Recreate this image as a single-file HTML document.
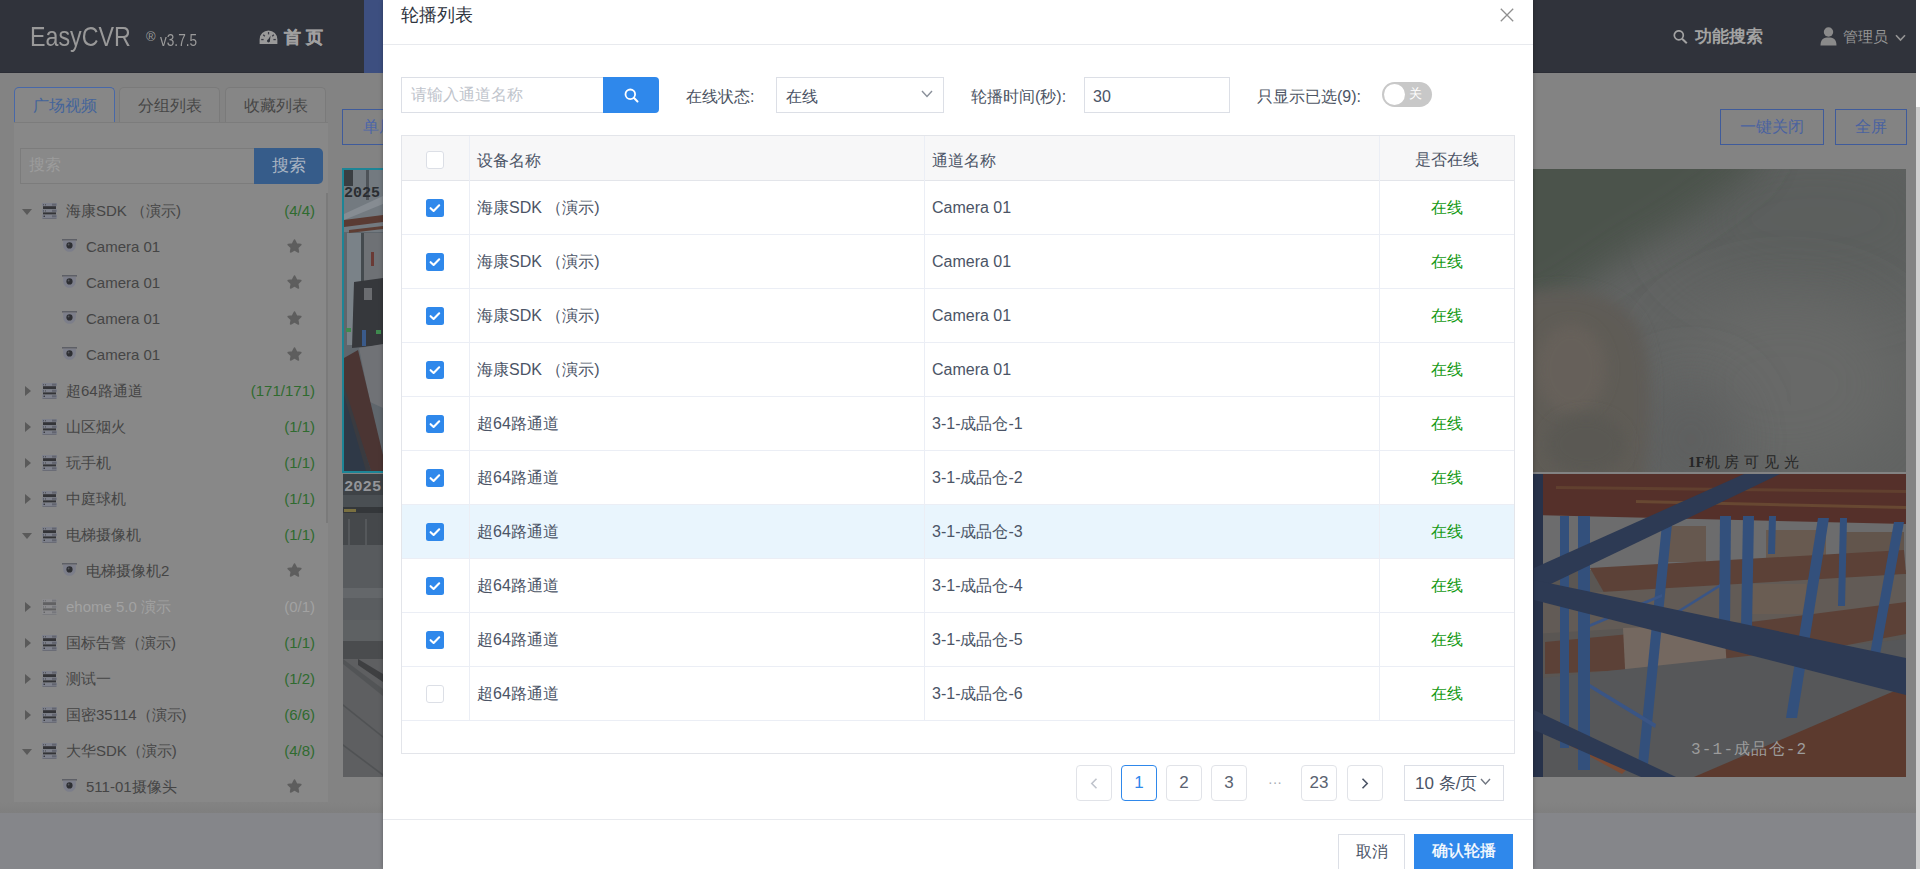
<!DOCTYPE html>
<html><head><meta charset="utf-8">
<style>
*{box-sizing:border-box;margin:0;padding:0}
html,body{width:1920px;height:869px;overflow:hidden;background:#838383;font-family:"Liberation Sans",sans-serif;position:relative}
.a{position:absolute}
#hdr{left:0;top:0;width:1920px;height:73px;background:#30333b;border-bottom:1px solid #2b2d35}
.logo{left:30px;top:17px;font-size:28px;color:#999999;line-height:40px;white-space:nowrap;transform-origin:0 0;transform:scaleX(0.83)}
.ver{left:146px;top:29px;font-size:16px;color:#9b9b9b;line-height:24px;white-space:nowrap}
.home{left:284px;top:26px;font-size:17px;font-weight:bold;color:#a0a0a0;letter-spacing:5px;-webkit-text-stroke:0.4px #a0a0a0;line-height:24px}
.hdr-r{font-size:16px;font-weight:bold;color:#a3a3a3;line-height:24px;white-space:nowrap}
.tab{top:87px;height:36px;border:1px solid #7a7a7a;border-bottom:none;border-radius:5px 5px 0 0;font-size:16px;line-height:36px;text-align:center;color:#474747;background:#868686}
.tab.on{border-color:#4868a8;color:#44649a;height:37px;background:#878787}
#panel{left:14px;top:122px;width:314px;height:680px;background:#888888;border-top:1px solid #7c7c7c}
.tr{position:absolute;left:0;width:314px;height:36px;font-size:15px;color:#454545;line-height:36px;white-space:nowrap}
.tr span{position:absolute;top:0}
.tr .cnt{right:13px;color:#2f6b2f}
.tr .nm{left:52px}
.tr .nm2{left:72px}
.tr.dis span{color:#a2a2a2}
.tr.dis svg{opacity:.45}
.tr.dis .cnt{color:#a2a2a2}
.tri-d{left:8px;top:16px;width:0;height:0;border-left:5px solid transparent;border-right:5px solid transparent;border-top:6px solid #5a5a5a}
.tri-r{left:11px;top:13px;width:0;height:0;border-top:5px solid transparent;border-bottom:5px solid transparent;border-left:6px solid #5a5a5a}
.btn-o{border:1px solid #3f5b9b;color:#4a62a0;font-size:16px;text-align:center;line-height:33px;height:36px}
#modal{left:383px;top:0;width:1150px;height:869px;background:#fff;box-shadow:0 0 4px rgba(0,0,0,.3)}
.m{position:absolute}
.lbl{font-size:16px;color:#4d5564;line-height:24px;white-space:nowrap}
.inp{border:1px solid #dcdfe6;background:#fff;height:36px}
#tbl{left:18px;top:135px;width:1114px;height:619px;border:1px solid #e3e5ea}
.row{left:0;width:1112px;height:54px;border-bottom:1px solid #ebeef5}
.row span{font-size:16px;color:#4b5466;line-height:24px;top:15px;white-space:nowrap}
.row .c1{left:75px}
.row .c2{left:530px}
.row .c3{left:977px;width:135px;text-align:center;color:#159a15}
.row .cb{left:24px;top:18px;width:18px;height:18px}
.vl{width:1px;background:#ebeef5}
.pg{top:765px;width:36px;height:36px;border:1px solid #e1e3e8;border-radius:4px;font-size:17px;color:#5a6270;text-align:center;line-height:33px}
</style></head><body>
<!-- header -->
<div id="hdr" class="a"></div>
<div class="a" style="left:364px;top:0;width:30px;height:73px;background:#3d4f80"></div>
<div class="a logo">EasyCVR</div>
<div class="a ver"><span style="font-size:13px;position:relative;top:-5px">®</span> <span style="display:inline-block;transform:scaleX(0.85);transform-origin:0 0">v3.7.5</span></div>
<svg class="a" style="left:259px;top:30px" width="19" height="14" viewBox="0 0 19 14"><path d="M0.6 14 L0.6 9.4 A8.9 8.9 0 0 1 18.4 9.4 L18.4 14 Z" fill="#9a9a9a"/><rect x="8.9" y="2" width="1.3" height="2.4" fill="#3a3b45"/><rect x="4.4" y="4.4" width="1.3" height="2.2" fill="#3a3b45" transform="rotate(-45 5 5.5)"/><rect x="13.4" y="4.4" width="1.3" height="2.2" fill="#3a3b45" transform="rotate(45 14 5.5)"/><rect x="2.2" y="8.9" width="2.4" height="1.3" fill="#3a3b45"/><rect x="14.4" y="8.9" width="2.4" height="1.3" fill="#3a3b45"/><path d="M8.2 11.2 L10.8 11.6 L11.6 5.6 Z" fill="#30333b"/><circle cx="9.5" cy="11" r="1.4" fill="#30333b"/></svg>
<div class="a home">首页</div>
<svg class="a" style="left:1673px;top:30px" width="15" height="15" viewBox="0 0 15 15"><circle cx="5.8" cy="5.3" r="4.5" fill="none" stroke="#a3a3a3" stroke-width="1.7"/><path d="M9.1 8.7 L13.8 13.3" stroke="#a3a3a3" stroke-width="2"/></svg>
<div class="a hdr-r" style="left:1695px;top:25px;font-size:17px">功能搜索</div>
<svg class="a" style="left:1820px;top:27px" width="17" height="19" viewBox="0 0 17 19"><circle cx="8.5" cy="5" r="4.7" fill="#8a8a8a"/><path d="M0.5 18.5 C0.5 12 4 10.5 8.5 10.5 C13 10.5 16.5 12 16.5 18.5 Z" fill="#8a8a8a"/></svg>
<div class="a" style="left:1843px;top:25px;font-size:15px;color:#959595;line-height:24px">管理员</div>
<svg class="a" style="left:1895px;top:34px" width="11" height="8" viewBox="0 0 11 8"><path d="M1 1.2 L5.5 6 L10 1.2" fill="none" stroke="#959595" stroke-width="1.6"/></svg>

<!-- left tabs -->
<div class="a tab on" style="left:14px;width:101px">广场视频</div>
<div class="a tab" style="left:119px;width:101px">分组列表</div>
<div class="a tab" style="left:225px;width:101px">收藏列表</div>
<div class="a" id="panel">
  <div class="a" style="left:6px;top:25px;width:234px;height:36px;border:1px solid #7c7c7c;border-right:none;background:#898989"></div>
  <div class="a" style="left:15px;top:30px;font-size:16px;color:#9c9c9c;line-height:24px">搜索</div>
  <div class="a" style="left:240px;top:25px;width:69px;height:36px;background:#365c8a;border-radius:0 5px 5px 0;color:#a9b4c2;font-size:17px;text-align:center;line-height:36px">搜索</div>
  <div class="a" style="left:312px;top:70px;width:2px;height:330px;background:#7a7a7a"></div>
  <div class="tr" style="top:70px"><div class="a tri-d"></div><svg class="a" style="left:28px;top:10px" width="15" height="16" viewBox="0 0 15 16"><rect x="0" y="0" width="15" height="3.2" fill="#7d808b"/><rect x="10" y="0.6" width="4.4" height="2" fill="#62646f"/><rect x="1" y="1" width="1" height="1.4" fill="#55575f"/><rect x="3" y="1" width="1" height="1.4" fill="#55575f"/><rect x="1" y="3.2" width="13" height="3" fill="#333438"/><rect x="0" y="6.2" width="15" height="3.2" fill="#7d808b"/><rect x="10" y="6.8" width="4.4" height="2" fill="#62646f"/><rect x="1" y="7.2" width="1" height="1.4" fill="#55575f"/><rect x="3" y="7.2" width="1" height="1.4" fill="#55575f"/><rect x="1" y="9.4" width="13" height="2.2" fill="#333438"/><rect x="0" y="11.6" width="15" height="3.4" fill="#7d808b"/><rect x="10" y="12.3" width="4.4" height="2" fill="#62646f"/><rect x="1.5" y="12.6" width="1.5" height="1.4" fill="#3a3b40"/><rect x="0.5" y="15" width="14" height="1" fill="#6a6c76"/></svg><span class="nm">海康SDK （演示)</span><span class="cnt">(4/4)</span></div>
<div class="tr" style="top:106px"><svg class="a" style="left:48px;top:10.3px" width="15" height="14" viewBox="0 0 15 14"><rect x="0" y="0" width="15" height="1.6" fill="#5d5f66"/><path d="M1.2 1.8 H13.8 V6.5 A6.3 6.3 0 0 1 1.2 6.5 Z" fill="#7c7e8a"/><circle cx="7.5" cy="6.4" r="3.1" fill="#2e2f33"/><circle cx="6.6" cy="5.5" r="0.9" fill="#55575e"/></svg><span class="nm2">Camera 01</span><svg class="a" style="left:273px;top:10px" width="15" height="15" viewBox="0 0 15 15"><polygon points="7.50,1.00 9.44,4.93 13.78,5.56 10.64,8.62 11.38,12.94 7.50,10.90 3.62,12.94 4.36,8.62 1.22,5.56 5.56,4.93" fill="#5e5e5e" stroke="#5e5e5e" stroke-width="1.6" stroke-linejoin="round"/></svg></div>
<div class="tr" style="top:142px"><svg class="a" style="left:48px;top:10.3px" width="15" height="14" viewBox="0 0 15 14"><rect x="0" y="0" width="15" height="1.6" fill="#5d5f66"/><path d="M1.2 1.8 H13.8 V6.5 A6.3 6.3 0 0 1 1.2 6.5 Z" fill="#7c7e8a"/><circle cx="7.5" cy="6.4" r="3.1" fill="#2e2f33"/><circle cx="6.6" cy="5.5" r="0.9" fill="#55575e"/></svg><span class="nm2">Camera 01</span><svg class="a" style="left:273px;top:10px" width="15" height="15" viewBox="0 0 15 15"><polygon points="7.50,1.00 9.44,4.93 13.78,5.56 10.64,8.62 11.38,12.94 7.50,10.90 3.62,12.94 4.36,8.62 1.22,5.56 5.56,4.93" fill="#5e5e5e" stroke="#5e5e5e" stroke-width="1.6" stroke-linejoin="round"/></svg></div>
<div class="tr" style="top:178px"><svg class="a" style="left:48px;top:10.3px" width="15" height="14" viewBox="0 0 15 14"><rect x="0" y="0" width="15" height="1.6" fill="#5d5f66"/><path d="M1.2 1.8 H13.8 V6.5 A6.3 6.3 0 0 1 1.2 6.5 Z" fill="#7c7e8a"/><circle cx="7.5" cy="6.4" r="3.1" fill="#2e2f33"/><circle cx="6.6" cy="5.5" r="0.9" fill="#55575e"/></svg><span class="nm2">Camera 01</span><svg class="a" style="left:273px;top:10px" width="15" height="15" viewBox="0 0 15 15"><polygon points="7.50,1.00 9.44,4.93 13.78,5.56 10.64,8.62 11.38,12.94 7.50,10.90 3.62,12.94 4.36,8.62 1.22,5.56 5.56,4.93" fill="#5e5e5e" stroke="#5e5e5e" stroke-width="1.6" stroke-linejoin="round"/></svg></div>
<div class="tr" style="top:214px"><svg class="a" style="left:48px;top:10.3px" width="15" height="14" viewBox="0 0 15 14"><rect x="0" y="0" width="15" height="1.6" fill="#5d5f66"/><path d="M1.2 1.8 H13.8 V6.5 A6.3 6.3 0 0 1 1.2 6.5 Z" fill="#7c7e8a"/><circle cx="7.5" cy="6.4" r="3.1" fill="#2e2f33"/><circle cx="6.6" cy="5.5" r="0.9" fill="#55575e"/></svg><span class="nm2">Camera 01</span><svg class="a" style="left:273px;top:10px" width="15" height="15" viewBox="0 0 15 15"><polygon points="7.50,1.00 9.44,4.93 13.78,5.56 10.64,8.62 11.38,12.94 7.50,10.90 3.62,12.94 4.36,8.62 1.22,5.56 5.56,4.93" fill="#5e5e5e" stroke="#5e5e5e" stroke-width="1.6" stroke-linejoin="round"/></svg></div>
<div class="tr" style="top:250px"><div class="a tri-r"></div><svg class="a" style="left:28px;top:10px" width="15" height="16" viewBox="0 0 15 16"><rect x="0" y="0" width="15" height="3.2" fill="#7d808b"/><rect x="10" y="0.6" width="4.4" height="2" fill="#62646f"/><rect x="1" y="1" width="1" height="1.4" fill="#55575f"/><rect x="3" y="1" width="1" height="1.4" fill="#55575f"/><rect x="1" y="3.2" width="13" height="3" fill="#333438"/><rect x="0" y="6.2" width="15" height="3.2" fill="#7d808b"/><rect x="10" y="6.8" width="4.4" height="2" fill="#62646f"/><rect x="1" y="7.2" width="1" height="1.4" fill="#55575f"/><rect x="3" y="7.2" width="1" height="1.4" fill="#55575f"/><rect x="1" y="9.4" width="13" height="2.2" fill="#333438"/><rect x="0" y="11.6" width="15" height="3.4" fill="#7d808b"/><rect x="10" y="12.3" width="4.4" height="2" fill="#62646f"/><rect x="1.5" y="12.6" width="1.5" height="1.4" fill="#3a3b40"/><rect x="0.5" y="15" width="14" height="1" fill="#6a6c76"/></svg><span class="nm">超64路通道</span><span class="cnt">(171/171)</span></div>
<div class="tr" style="top:286px"><div class="a tri-r"></div><svg class="a" style="left:28px;top:10px" width="15" height="16" viewBox="0 0 15 16"><rect x="0" y="0" width="15" height="3.2" fill="#7d808b"/><rect x="10" y="0.6" width="4.4" height="2" fill="#62646f"/><rect x="1" y="1" width="1" height="1.4" fill="#55575f"/><rect x="3" y="1" width="1" height="1.4" fill="#55575f"/><rect x="1" y="3.2" width="13" height="3" fill="#333438"/><rect x="0" y="6.2" width="15" height="3.2" fill="#7d808b"/><rect x="10" y="6.8" width="4.4" height="2" fill="#62646f"/><rect x="1" y="7.2" width="1" height="1.4" fill="#55575f"/><rect x="3" y="7.2" width="1" height="1.4" fill="#55575f"/><rect x="1" y="9.4" width="13" height="2.2" fill="#333438"/><rect x="0" y="11.6" width="15" height="3.4" fill="#7d808b"/><rect x="10" y="12.3" width="4.4" height="2" fill="#62646f"/><rect x="1.5" y="12.6" width="1.5" height="1.4" fill="#3a3b40"/><rect x="0.5" y="15" width="14" height="1" fill="#6a6c76"/></svg><span class="nm">山区烟火</span><span class="cnt">(1/1)</span></div>
<div class="tr" style="top:322px"><div class="a tri-r"></div><svg class="a" style="left:28px;top:10px" width="15" height="16" viewBox="0 0 15 16"><rect x="0" y="0" width="15" height="3.2" fill="#7d808b"/><rect x="10" y="0.6" width="4.4" height="2" fill="#62646f"/><rect x="1" y="1" width="1" height="1.4" fill="#55575f"/><rect x="3" y="1" width="1" height="1.4" fill="#55575f"/><rect x="1" y="3.2" width="13" height="3" fill="#333438"/><rect x="0" y="6.2" width="15" height="3.2" fill="#7d808b"/><rect x="10" y="6.8" width="4.4" height="2" fill="#62646f"/><rect x="1" y="7.2" width="1" height="1.4" fill="#55575f"/><rect x="3" y="7.2" width="1" height="1.4" fill="#55575f"/><rect x="1" y="9.4" width="13" height="2.2" fill="#333438"/><rect x="0" y="11.6" width="15" height="3.4" fill="#7d808b"/><rect x="10" y="12.3" width="4.4" height="2" fill="#62646f"/><rect x="1.5" y="12.6" width="1.5" height="1.4" fill="#3a3b40"/><rect x="0.5" y="15" width="14" height="1" fill="#6a6c76"/></svg><span class="nm">玩手机</span><span class="cnt">(1/1)</span></div>
<div class="tr" style="top:358px"><div class="a tri-r"></div><svg class="a" style="left:28px;top:10px" width="15" height="16" viewBox="0 0 15 16"><rect x="0" y="0" width="15" height="3.2" fill="#7d808b"/><rect x="10" y="0.6" width="4.4" height="2" fill="#62646f"/><rect x="1" y="1" width="1" height="1.4" fill="#55575f"/><rect x="3" y="1" width="1" height="1.4" fill="#55575f"/><rect x="1" y="3.2" width="13" height="3" fill="#333438"/><rect x="0" y="6.2" width="15" height="3.2" fill="#7d808b"/><rect x="10" y="6.8" width="4.4" height="2" fill="#62646f"/><rect x="1" y="7.2" width="1" height="1.4" fill="#55575f"/><rect x="3" y="7.2" width="1" height="1.4" fill="#55575f"/><rect x="1" y="9.4" width="13" height="2.2" fill="#333438"/><rect x="0" y="11.6" width="15" height="3.4" fill="#7d808b"/><rect x="10" y="12.3" width="4.4" height="2" fill="#62646f"/><rect x="1.5" y="12.6" width="1.5" height="1.4" fill="#3a3b40"/><rect x="0.5" y="15" width="14" height="1" fill="#6a6c76"/></svg><span class="nm">中庭球机</span><span class="cnt">(1/1)</span></div>
<div class="tr" style="top:394px"><div class="a tri-d"></div><svg class="a" style="left:28px;top:10px" width="15" height="16" viewBox="0 0 15 16"><rect x="0" y="0" width="15" height="3.2" fill="#7d808b"/><rect x="10" y="0.6" width="4.4" height="2" fill="#62646f"/><rect x="1" y="1" width="1" height="1.4" fill="#55575f"/><rect x="3" y="1" width="1" height="1.4" fill="#55575f"/><rect x="1" y="3.2" width="13" height="3" fill="#333438"/><rect x="0" y="6.2" width="15" height="3.2" fill="#7d808b"/><rect x="10" y="6.8" width="4.4" height="2" fill="#62646f"/><rect x="1" y="7.2" width="1" height="1.4" fill="#55575f"/><rect x="3" y="7.2" width="1" height="1.4" fill="#55575f"/><rect x="1" y="9.4" width="13" height="2.2" fill="#333438"/><rect x="0" y="11.6" width="15" height="3.4" fill="#7d808b"/><rect x="10" y="12.3" width="4.4" height="2" fill="#62646f"/><rect x="1.5" y="12.6" width="1.5" height="1.4" fill="#3a3b40"/><rect x="0.5" y="15" width="14" height="1" fill="#6a6c76"/></svg><span class="nm">电梯摄像机</span><span class="cnt">(1/1)</span></div>
<div class="tr" style="top:430px"><svg class="a" style="left:48px;top:10.3px" width="15" height="14" viewBox="0 0 15 14"><rect x="0" y="0" width="15" height="1.6" fill="#5d5f66"/><path d="M1.2 1.8 H13.8 V6.5 A6.3 6.3 0 0 1 1.2 6.5 Z" fill="#7c7e8a"/><circle cx="7.5" cy="6.4" r="3.1" fill="#2e2f33"/><circle cx="6.6" cy="5.5" r="0.9" fill="#55575e"/></svg><span class="nm2">电梯摄像机2</span><svg class="a" style="left:273px;top:10px" width="15" height="15" viewBox="0 0 15 15"><polygon points="7.50,1.00 9.44,4.93 13.78,5.56 10.64,8.62 11.38,12.94 7.50,10.90 3.62,12.94 4.36,8.62 1.22,5.56 5.56,4.93" fill="#5e5e5e" stroke="#5e5e5e" stroke-width="1.6" stroke-linejoin="round"/></svg></div>
<div class="tr dis" style="top:466px"><div class="a tri-r"></div><svg class="a" style="left:28px;top:10px" width="15" height="16" viewBox="0 0 15 16"><rect x="0" y="0" width="15" height="3.2" fill="#8f9096"/><rect x="10" y="0.6" width="4.4" height="2" fill="#62646f"/><rect x="1" y="1" width="1" height="1.4" fill="#55575f"/><rect x="3" y="1" width="1" height="1.4" fill="#55575f"/><rect x="1" y="3.2" width="13" height="3" fill="#333438"/><rect x="0" y="6.2" width="15" height="3.2" fill="#8f9096"/><rect x="10" y="6.8" width="4.4" height="2" fill="#62646f"/><rect x="1" y="7.2" width="1" height="1.4" fill="#55575f"/><rect x="3" y="7.2" width="1" height="1.4" fill="#55575f"/><rect x="1" y="9.4" width="13" height="2.2" fill="#333438"/><rect x="0" y="11.6" width="15" height="3.4" fill="#8f9096"/><rect x="10" y="12.3" width="4.4" height="2" fill="#62646f"/><rect x="1.5" y="12.6" width="1.5" height="1.4" fill="#3a3b40"/><rect x="0.5" y="15" width="14" height="1" fill="#6a6c76"/></svg><span class="nm">ehome 5.0 演示</span><span class="cnt">(0/1)</span></div>
<div class="tr" style="top:502px"><div class="a tri-r"></div><svg class="a" style="left:28px;top:10px" width="15" height="16" viewBox="0 0 15 16"><rect x="0" y="0" width="15" height="3.2" fill="#7d808b"/><rect x="10" y="0.6" width="4.4" height="2" fill="#62646f"/><rect x="1" y="1" width="1" height="1.4" fill="#55575f"/><rect x="3" y="1" width="1" height="1.4" fill="#55575f"/><rect x="1" y="3.2" width="13" height="3" fill="#333438"/><rect x="0" y="6.2" width="15" height="3.2" fill="#7d808b"/><rect x="10" y="6.8" width="4.4" height="2" fill="#62646f"/><rect x="1" y="7.2" width="1" height="1.4" fill="#55575f"/><rect x="3" y="7.2" width="1" height="1.4" fill="#55575f"/><rect x="1" y="9.4" width="13" height="2.2" fill="#333438"/><rect x="0" y="11.6" width="15" height="3.4" fill="#7d808b"/><rect x="10" y="12.3" width="4.4" height="2" fill="#62646f"/><rect x="1.5" y="12.6" width="1.5" height="1.4" fill="#3a3b40"/><rect x="0.5" y="15" width="14" height="1" fill="#6a6c76"/></svg><span class="nm">国标告警（演示)</span><span class="cnt">(1/1)</span></div>
<div class="tr" style="top:538px"><div class="a tri-r"></div><svg class="a" style="left:28px;top:10px" width="15" height="16" viewBox="0 0 15 16"><rect x="0" y="0" width="15" height="3.2" fill="#7d808b"/><rect x="10" y="0.6" width="4.4" height="2" fill="#62646f"/><rect x="1" y="1" width="1" height="1.4" fill="#55575f"/><rect x="3" y="1" width="1" height="1.4" fill="#55575f"/><rect x="1" y="3.2" width="13" height="3" fill="#333438"/><rect x="0" y="6.2" width="15" height="3.2" fill="#7d808b"/><rect x="10" y="6.8" width="4.4" height="2" fill="#62646f"/><rect x="1" y="7.2" width="1" height="1.4" fill="#55575f"/><rect x="3" y="7.2" width="1" height="1.4" fill="#55575f"/><rect x="1" y="9.4" width="13" height="2.2" fill="#333438"/><rect x="0" y="11.6" width="15" height="3.4" fill="#7d808b"/><rect x="10" y="12.3" width="4.4" height="2" fill="#62646f"/><rect x="1.5" y="12.6" width="1.5" height="1.4" fill="#3a3b40"/><rect x="0.5" y="15" width="14" height="1" fill="#6a6c76"/></svg><span class="nm">测试一</span><span class="cnt">(1/2)</span></div>
<div class="tr" style="top:574px"><div class="a tri-r"></div><svg class="a" style="left:28px;top:10px" width="15" height="16" viewBox="0 0 15 16"><rect x="0" y="0" width="15" height="3.2" fill="#7d808b"/><rect x="10" y="0.6" width="4.4" height="2" fill="#62646f"/><rect x="1" y="1" width="1" height="1.4" fill="#55575f"/><rect x="3" y="1" width="1" height="1.4" fill="#55575f"/><rect x="1" y="3.2" width="13" height="3" fill="#333438"/><rect x="0" y="6.2" width="15" height="3.2" fill="#7d808b"/><rect x="10" y="6.8" width="4.4" height="2" fill="#62646f"/><rect x="1" y="7.2" width="1" height="1.4" fill="#55575f"/><rect x="3" y="7.2" width="1" height="1.4" fill="#55575f"/><rect x="1" y="9.4" width="13" height="2.2" fill="#333438"/><rect x="0" y="11.6" width="15" height="3.4" fill="#7d808b"/><rect x="10" y="12.3" width="4.4" height="2" fill="#62646f"/><rect x="1.5" y="12.6" width="1.5" height="1.4" fill="#3a3b40"/><rect x="0.5" y="15" width="14" height="1" fill="#6a6c76"/></svg><span class="nm">国密35114（演示)</span><span class="cnt">(6/6)</span></div>
<div class="tr" style="top:610px"><div class="a tri-d"></div><svg class="a" style="left:28px;top:10px" width="15" height="16" viewBox="0 0 15 16"><rect x="0" y="0" width="15" height="3.2" fill="#7d808b"/><rect x="10" y="0.6" width="4.4" height="2" fill="#62646f"/><rect x="1" y="1" width="1" height="1.4" fill="#55575f"/><rect x="3" y="1" width="1" height="1.4" fill="#55575f"/><rect x="1" y="3.2" width="13" height="3" fill="#333438"/><rect x="0" y="6.2" width="15" height="3.2" fill="#7d808b"/><rect x="10" y="6.8" width="4.4" height="2" fill="#62646f"/><rect x="1" y="7.2" width="1" height="1.4" fill="#55575f"/><rect x="3" y="7.2" width="1" height="1.4" fill="#55575f"/><rect x="1" y="9.4" width="13" height="2.2" fill="#333438"/><rect x="0" y="11.6" width="15" height="3.4" fill="#7d808b"/><rect x="10" y="12.3" width="4.4" height="2" fill="#62646f"/><rect x="1.5" y="12.6" width="1.5" height="1.4" fill="#3a3b40"/><rect x="0.5" y="15" width="14" height="1" fill="#6a6c76"/></svg><span class="nm">大华SDK（演示)</span><span class="cnt">(4/8)</span></div>
<div class="tr" style="top:646px"><svg class="a" style="left:48px;top:10.3px" width="15" height="14" viewBox="0 0 15 14"><rect x="0" y="0" width="15" height="1.6" fill="#5d5f66"/><path d="M1.2 1.8 H13.8 V6.5 A6.3 6.3 0 0 1 1.2 6.5 Z" fill="#7c7e8a"/><circle cx="7.5" cy="6.4" r="3.1" fill="#2e2f33"/><circle cx="6.6" cy="5.5" r="0.9" fill="#55575e"/></svg><span class="nm2">511-01摄像头</span><svg class="a" style="left:273px;top:10px" width="15" height="15" viewBox="0 0 15 15"><polygon points="7.50,1.00 9.44,4.93 13.78,5.56 10.64,8.62 11.38,12.94 7.50,10.90 3.62,12.94 4.36,8.62 1.22,5.56 5.56,4.93" fill="#5e5e5e" stroke="#5e5e5e" stroke-width="1.6" stroke-linejoin="round"/></svg></div>
</div>
<div class="a" style="left:0;top:802px;width:1916px;height:11px;background:linear-gradient(#838383,#7f7f7f)"></div>
<div class="a" style="left:0;top:813px;width:1916px;height:56px;background:#85868a"></div>

<!-- middle tiles -->
<div class="a btn-o" style="left:342px;top:109px;width:74px;color:#4d66a8">单屏</div>
<div class="a" style="left:342px;top:168px;width:60px;height:305px;border:2px solid #1d8596;background:#5f666c"></div>
<svg class="a" style="left:344px;top:170px" width="39" height="301" viewBox="0 0 39 301">
  <rect width="39" height="301" fill="#5f666c"/>
  <rect x="0" y="0" width="39" height="62" fill="#737a80"/>
  <rect x="0" y="0" width="9" height="16" fill="#3a3e42"/>
  <rect x="22" y="0" width="3" height="30" fill="#4e5358"/>
  <polygon points="0,44 39,26 39,34 0,50" fill="#868c92"/>
  <polygon points="0,50 39,45 39,52 0,57" fill="#5a3b33"/>
  <polygon points="5,60 39,56 39,59 5,63" fill="#5e3e34"/>
  <rect x="3" y="63" width="14" height="112" fill="#7a8288"/>
  <rect x="17" y="63" width="3" height="100" fill="#444a4e"/>
  <rect x="20" y="63" width="19" height="55" fill="#6e7175"/>
  <rect x="27" y="82" width="3" height="14" fill="#6a3a35"/>
  <polygon points="10,112 39,108 39,175 8,178" fill="#36383c"/>
  <rect x="20" y="118" width="8" height="12" fill="#6a6c70"/>
  <rect x="2" y="158" width="5" height="4" fill="#3f8a4f"/>
  <rect x="32" y="160" width="5" height="4" fill="#3f8a4f"/>
  <rect x="18" y="160" width="4" height="16" fill="#3a5a8a"/>
  <polygon points="15,178 39,174 39,238 26,232" fill="#707276"/>
  <polygon points="0,188 14,180 39,285 39,301 27,301 0,222" fill="#4b3533"/>
  <polygon points="0,222 27,301 0,301" fill="#2f3947"/>
  <polygon points="0,215 0,225 22,301 27,301" fill="#3a3b40"/>
  <text x="0" y="27" font-family="Liberation Mono, monospace" font-size="15" font-weight="bold" fill="#2a2d31">2025</text>
</svg>
<svg class="a" style="left:343px;top:474px" width="40" height="303" viewBox="0 0 40 303">
  <rect width="40" height="303" fill="#5c5e60"/>
  <rect x="0" y="0" width="40" height="21" fill="#3e4246"/>
  <rect x="0" y="21" width="40" height="12" fill="#4a4f53"/>
  <rect x="0" y="33" width="40" height="6" fill="#34373a"/>
  <rect x="1" y="35" width="12" height="3" fill="#7a7040"/>
  <rect x="0" y="39" width="40" height="32" fill="#45484b"/>
  <rect x="5" y="45" width="2" height="26" fill="#55585b"/>
  <rect x="22" y="45" width="2" height="26" fill="#55585b"/>
  <rect x="0" y="71" width="40" height="43" fill="#585b5e"/>
  <rect x="0" y="114" width="40" height="10" fill="#64676a"/>
  <rect x="0" y="124" width="40" height="22" fill="#5a5d60"/>
  <rect x="0" y="146" width="40" height="21" fill="#5e6163"/>
  <rect x="0" y="167" width="40" height="18" fill="#4a4c4e"/>
  <rect x="0" y="185" width="40" height="118" fill="#5e5f61"/>
  <polygon points="0,185 40,215 40,222 0,190" fill="#525456"/>
  <polygon points="15,185 40,200 40,208 15,191" fill="#3e3f41"/>
  <polygon points="0,230 40,262 40,264 0,232" fill="#505254"/>
  <polygon points="0,270 40,300 40,302 0,272" fill="#505254"/>
  <text x="1" y="17" font-family="Liberation Mono, monospace" font-size="15.5" font-weight="bold" fill="#94969a">2025</text>
</svg>
<!-- right buttons -->
<div class="a btn-o" style="left:1720px;top:109px;width:104px">一键关闭</div>
<div class="a btn-o" style="left:1835px;top:109px;width:72px">全屏</div>
<!-- right tiles -->
<div class="a" style="left:1516px;top:169px;width:390px;height:303px;overflow:hidden;background:#616362">
  <svg class="a" style="left:0;top:0" width="390" height="303" viewBox="0 0 390 303">
    <defs>
      <filter id="bl8" x="-50%" y="-50%" width="200%" height="200%"><feGaussianBlur stdDeviation="7"/></filter>
      <filter id="bl16" x="-50%" y="-50%" width="200%" height="200%"><feGaussianBlur stdDeviation="18"/></filter>
      <filter id="bl30" x="-50%" y="-50%" width="200%" height="200%"><feGaussianBlur stdDeviation="30"/></filter>
    </defs>
    <rect x="-50" y="-50" width="500" height="400" fill="#616362"/>
    <ellipse cx="300" cy="50" rx="140" ry="80" fill="#5c5e5d" filter="url(#bl30)"/>
    <ellipse cx="270" cy="215" rx="120" ry="90" fill="#686968" filter="url(#bl30)"/>
    <path d="M-60,-60 L260,-60 L240,0 C200,30 160,60 120,80 C90,100 60,120 30,140 L-60,140 Z" fill="#4c524c" filter="url(#bl16)"/>
    <ellipse cx="175" cy="270" rx="50" ry="60" fill="#5d5f5e" filter="url(#bl30)"/>
    <path d="M-60,128 L10,124 C50,116 95,120 118,150 C138,180 136,240 130,303 L130,360 L-60,360 Z" fill="#5e5b56" filter="url(#bl8)"/>
    <ellipse cx="55" cy="200" rx="35" ry="45" fill="#66605a" filter="url(#bl8)"/>
    <ellipse cx="70" cy="275" rx="40" ry="30" fill="#5a5853" filter="url(#bl8)"/>
  </svg>
  <div class="a" style="left:172px;top:283px;font-size:15px;color:#262626;line-height:20px;white-space:nowrap;font-family:'Liberation Serif',serif"><b>1F</b><span style="letter-spacing:4.8px">机房可见光</span></div>
</div>
<div class="a" style="left:1516px;top:474px;width:390px;height:303px;overflow:hidden;background:#57524e">
  <svg class="a" style="left:0;top:0" width="390" height="303" viewBox="0 0 390 303">
    <rect width="390" height="303" fill="#5a5653"/>
    <polygon points="17,40 390,48 390,96 17,96" fill="#6c6c6d"/>
    <rect x="150" y="52" width="40" height="36" fill="#66584f"/>
    <rect x="250" y="56" width="60" height="34" fill="#685a50"/>
    <rect x="330" y="58" width="58" height="34" fill="#62554c"/>
    <polygon points="0,0 390,0 390,50 17,41 0,41" fill="#55302a"/>
    <polygon points="40,12 390,16 390,19 40,15" fill="#61402f"/>
    <polygon points="120,26 390,32 390,35 120,29" fill="#684832"/>
    <polygon points="74,94 388,76 390,100 90,122" fill="#5c4137"/>
    <polygon points="17,122 390,100 390,138 17,160" fill="#625b56"/>
    <rect x="230" y="110" width="60" height="30" fill="#6a5d53"/>
    <polygon points="29,168 220,150 390,128 390,160 230,190 29,200" fill="#5c4137"/>
    <polygon points="107,154 208,150 212,210 110,214" fill="#746860"/>
    <polygon points="17,205 390,165 390,214 178,303 17,303" fill="#565759"/>
    <polygon points="178,303 390,212 390,303" fill="#5c3a2e"/>
    <polygon points="29,246 118,286 114,292 29,252" fill="#7a4a34"/>
    <polygon points="40,258 110,296 106,300 40,264" fill="#7a4a34"/>
    <polygon points="17,0 27,0 27,303 17,303" fill="#27324a"/>
    <polygon points="44,42 53,42 53,274 44,274" fill="#33507c"/>
    <polygon points="62,42 74,42 74,296 62,296" fill="#33507c"/>
    <polygon points="146,50 156,50 131,300 121,300" fill="#33507c"/>
    <polygon points="204,42 215,42 214,154 203,154" fill="#33507c"/>
    <polygon points="227,42 238,42 236,154 225,154" fill="#33507c"/>
    <polygon points="253,42 260,42 259,80 252,80" fill="#33507c"/>
    <polygon points="302,44 313,44 281,244 270,244" fill="#33507c"/>
    <polygon points="324,44 331,44 329,132 322,132" fill="#33507c"/>
    <polygon points="378,48 388,48 363,186 353,186" fill="#33507c"/>
    <polygon points="74,150 146,120 146,123 74,153" fill="#3a5585"/>
    <polygon points="156,140 204,110 204,113 156,143" fill="#3a5585"/>
    <polygon points="74,210 140,250 139,254 74,214" fill="#3a5585"/>
    <polygon points="228,0 264,0 18,118 18,94" fill="#2d3a54"/>
    <polygon points="18,106 390,184 390,221 18,126" fill="#2d3a54"/>
    <polygon points="18,236 160,303 125,303 18,256" fill="#2d3a54"/>
  </svg>
  <div class="a" style="left:175px;top:266px;font-size:16px;color:#9c9c9c;line-height:20px;white-space:nowrap;font-family:'Liberation Mono',monospace;letter-spacing:1.2px">3-1-成品仓-2</div>
</div>
<!-- page scrollbar -->
<div class="a" style="left:1916px;top:0;width:4px;height:107px;background:#fafafa"></div>
<div class="a" style="left:1916px;top:107px;width:4px;height:762px;background:#cfcfcf"></div>

<!-- modal -->
<div id="modal" class="a">
  <div class="m" style="left:18px;top:3px;font-size:18px;color:#2f3540;line-height:24px">轮播列表</div>
  <svg class="m" style="left:1117px;top:8px" width="14" height="14" viewBox="0 0 14 14"><path d="M0.8 0.8 L13.2 13.2 M13.2 0.8 L0.8 13.2" stroke="#8f8f8f" stroke-width="1.3"/></svg>
  <div class="m" style="left:0;top:44px;width:1150px;height:1px;background:#e8eaee"></div>

  <div class="m inp" style="left:18px;top:77px;width:203px;border-right:none"></div>
  <div class="m" style="left:28px;top:83px;font-size:16px;color:#c0c4cc;line-height:24px">请输入通道名称</div>
  <div class="m" style="left:220px;top:77px;width:56px;height:36px;background:#2f88eb;border-radius:0 4px 4px 0"></div>
  <svg class="m" style="left:241px;top:88px" width="15" height="15" viewBox="0 0 15 15"><circle cx="6.3" cy="6.3" r="4.8" fill="none" stroke="#fff" stroke-width="1.8"/><path d="M9.8 9.8 L13.5 13.5" stroke="#fff" stroke-width="2" stroke-linecap="round"/></svg>

  <div class="m lbl" style="left:303px;top:85px">在线状态:</div>
  <div class="m inp" style="left:393px;top:77px;width:168px"></div>
  <div class="m lbl" style="left:403px;top:85px;color:#4b5466">在线</div>
  <svg class="m" style="left:538px;top:90px" width="12" height="8" viewBox="0 0 12 8"><path d="M1 1 L6 6.5 L11 1" fill="none" stroke="#8a909a" stroke-width="1.4"/></svg>

  <div class="m lbl" style="left:588px;top:85px">轮播时间(秒):</div>
  <div class="m inp" style="left:701px;top:77px;width:146px"></div>
  <div class="m lbl" style="left:710px;top:85px;color:#4b5466">30</div>

  <div class="m lbl" style="left:874px;top:85px">只显示已选(9):</div>
  <div class="m" style="left:999px;top:82px;width:50px;height:25px;border-radius:13px;background:#c8c8c8"></div>
  <div class="m" style="left:1001px;top:84px;width:21px;height:21px;border-radius:50%;background:#fff"></div>
  <div class="m" style="left:1026px;top:84px;font-size:13px;color:#fff;line-height:20px">关</div>

  <div class="m" id="tbl">
    <div class="a" style="left:0;top:0;width:1112px;height:45px;background:#f7f7f8;border-bottom:1px solid #e3e5ea"></div>
    <div class="a" style="left:24px;top:15px"><svg width="18" height="18" viewBox="0 0 18 18"><rect x="0.5" y="0.5" width="17" height="17" rx="2.5" fill="#fff" stroke="#dcdfe6"/></svg></div>
    <span class="a" style="left:75px;top:13px;font-size:16px;color:#4b5466;line-height:24px">设备名称</span>
    <span class="a" style="left:530px;top:13px;font-size:16px;color:#4b5466;line-height:24px">通道名称</span>
    <span class="a" style="left:977px;width:135px;text-align:center;top:12px;font-size:16px;color:#4b5466;line-height:24px">是否在线</span>
    <div class="a row" style="top:45px;background:#fff"><div class="a cb"><svg width="18" height="18" viewBox="0 0 18 18"><rect x="0" y="0" width="18" height="18" rx="2.5" fill="#2f88eb"/><path d="M4.6 9.2 L7.6 12 L13.2 6.3" fill="none" stroke="#fff" stroke-width="2.1" stroke-linecap="round" stroke-linejoin="round"/></svg></div><span class="a c1">海康SDK （演示)</span><span class="a c2">Camera 01</span><span class="a c3">在线</span></div>
<div class="a row" style="top:99px;background:#fff"><div class="a cb"><svg width="18" height="18" viewBox="0 0 18 18"><rect x="0" y="0" width="18" height="18" rx="2.5" fill="#2f88eb"/><path d="M4.6 9.2 L7.6 12 L13.2 6.3" fill="none" stroke="#fff" stroke-width="2.1" stroke-linecap="round" stroke-linejoin="round"/></svg></div><span class="a c1">海康SDK （演示)</span><span class="a c2">Camera 01</span><span class="a c3">在线</span></div>
<div class="a row" style="top:153px;background:#fff"><div class="a cb"><svg width="18" height="18" viewBox="0 0 18 18"><rect x="0" y="0" width="18" height="18" rx="2.5" fill="#2f88eb"/><path d="M4.6 9.2 L7.6 12 L13.2 6.3" fill="none" stroke="#fff" stroke-width="2.1" stroke-linecap="round" stroke-linejoin="round"/></svg></div><span class="a c1">海康SDK （演示)</span><span class="a c2">Camera 01</span><span class="a c3">在线</span></div>
<div class="a row" style="top:207px;background:#fff"><div class="a cb"><svg width="18" height="18" viewBox="0 0 18 18"><rect x="0" y="0" width="18" height="18" rx="2.5" fill="#2f88eb"/><path d="M4.6 9.2 L7.6 12 L13.2 6.3" fill="none" stroke="#fff" stroke-width="2.1" stroke-linecap="round" stroke-linejoin="round"/></svg></div><span class="a c1">海康SDK （演示)</span><span class="a c2">Camera 01</span><span class="a c3">在线</span></div>
<div class="a row" style="top:261px;background:#fff"><div class="a cb"><svg width="18" height="18" viewBox="0 0 18 18"><rect x="0" y="0" width="18" height="18" rx="2.5" fill="#2f88eb"/><path d="M4.6 9.2 L7.6 12 L13.2 6.3" fill="none" stroke="#fff" stroke-width="2.1" stroke-linecap="round" stroke-linejoin="round"/></svg></div><span class="a c1">超64路通道</span><span class="a c2">3-1-成品仓-1</span><span class="a c3">在线</span></div>
<div class="a row" style="top:315px;background:#fff"><div class="a cb"><svg width="18" height="18" viewBox="0 0 18 18"><rect x="0" y="0" width="18" height="18" rx="2.5" fill="#2f88eb"/><path d="M4.6 9.2 L7.6 12 L13.2 6.3" fill="none" stroke="#fff" stroke-width="2.1" stroke-linecap="round" stroke-linejoin="round"/></svg></div><span class="a c1">超64路通道</span><span class="a c2">3-1-成品仓-2</span><span class="a c3">在线</span></div>
<div class="a row" style="top:369px;background:#e9f5fd"><div class="a cb"><svg width="18" height="18" viewBox="0 0 18 18"><rect x="0" y="0" width="18" height="18" rx="2.5" fill="#2f88eb"/><path d="M4.6 9.2 L7.6 12 L13.2 6.3" fill="none" stroke="#fff" stroke-width="2.1" stroke-linecap="round" stroke-linejoin="round"/></svg></div><span class="a c1">超64路通道</span><span class="a c2">3-1-成品仓-3</span><span class="a c3">在线</span></div>
<div class="a row" style="top:423px;background:#fff"><div class="a cb"><svg width="18" height="18" viewBox="0 0 18 18"><rect x="0" y="0" width="18" height="18" rx="2.5" fill="#2f88eb"/><path d="M4.6 9.2 L7.6 12 L13.2 6.3" fill="none" stroke="#fff" stroke-width="2.1" stroke-linecap="round" stroke-linejoin="round"/></svg></div><span class="a c1">超64路通道</span><span class="a c2">3-1-成品仓-4</span><span class="a c3">在线</span></div>
<div class="a row" style="top:477px;background:#fff"><div class="a cb"><svg width="18" height="18" viewBox="0 0 18 18"><rect x="0" y="0" width="18" height="18" rx="2.5" fill="#2f88eb"/><path d="M4.6 9.2 L7.6 12 L13.2 6.3" fill="none" stroke="#fff" stroke-width="2.1" stroke-linecap="round" stroke-linejoin="round"/></svg></div><span class="a c1">超64路通道</span><span class="a c2">3-1-成品仓-5</span><span class="a c3">在线</span></div>
<div class="a row" style="top:531px;background:#fff"><div class="a cb"><svg width="18" height="18" viewBox="0 0 18 18"><rect x="0.5" y="0.5" width="17" height="17" rx="2.5" fill="#fff" stroke="#dcdfe6"/></svg></div><span class="a c1">超64路通道</span><span class="a c2">3-1-成品仓-6</span><span class="a c3">在线</span></div>
    <div class="a vl" style="left:67px;top:0;height:585px"></div>
    <div class="a vl" style="left:522px;top:0;height:585px"></div>
    <div class="a vl" style="left:977px;top:0;height:585px"></div>
  </div>

  <div class="m pg" style="left:693px"></div><svg class="m" style="left:707px;top:778px" width="8" height="11" viewBox="0 0 8 11"><path d="M6.5 0.8 L1.8 5.5 L6.5 10.2" fill="none" stroke="#c0c4cc" stroke-width="1.6"/></svg>
  <div class="m pg" style="left:738px;border-color:#2f88eb;color:#2f88eb">1</div>
  <div class="m pg" style="left:783px">2</div>
  <div class="m pg" style="left:828px">3</div>
  <div class="m" style="left:885px;top:772px;font-size:14px;color:#a8acb3;line-height:20px">···</div>
  <div class="m pg" style="left:918px">23</div>
  <div class="m pg" style="left:964px"></div><svg class="m" style="left:978px;top:778px" width="8" height="11" viewBox="0 0 8 11"><path d="M1.5 0.8 L6.2 5.5 L1.5 10.2" fill="none" stroke="#4b5466" stroke-width="1.6"/></svg>
  <div class="m inp" style="left:1021px;top:765px;width:100px;height:36px"></div>
  <div class="m" style="left:1032px;top:772px;font-size:17px;color:#4b5466;line-height:24px">10 条/页</div>
  <svg class="m" style="left:1097px;top:778px" width="11" height="8" viewBox="0 0 11 8"><path d="M1 1 L5.5 6 L10 1" fill="none" stroke="#707680" stroke-width="1.4"/></svg>

  <div class="m" style="left:0;top:819px;width:1150px;height:1px;background:#e8eaee"></div>
  <div class="m" style="left:955px;top:834px;width:67px;height:40px;border:1px solid #dcdfe6;font-size:16px;color:#4b5466;text-align:center;line-height:34px">取消</div>
  <div class="m" style="left:1031px;top:834px;width:99px;height:40px;background:#2f88eb;font-size:16px;color:#fff;text-align:center;line-height:34px;-webkit-text-stroke:0.3px #fff">确认轮播</div>
</div>
</body></html>
